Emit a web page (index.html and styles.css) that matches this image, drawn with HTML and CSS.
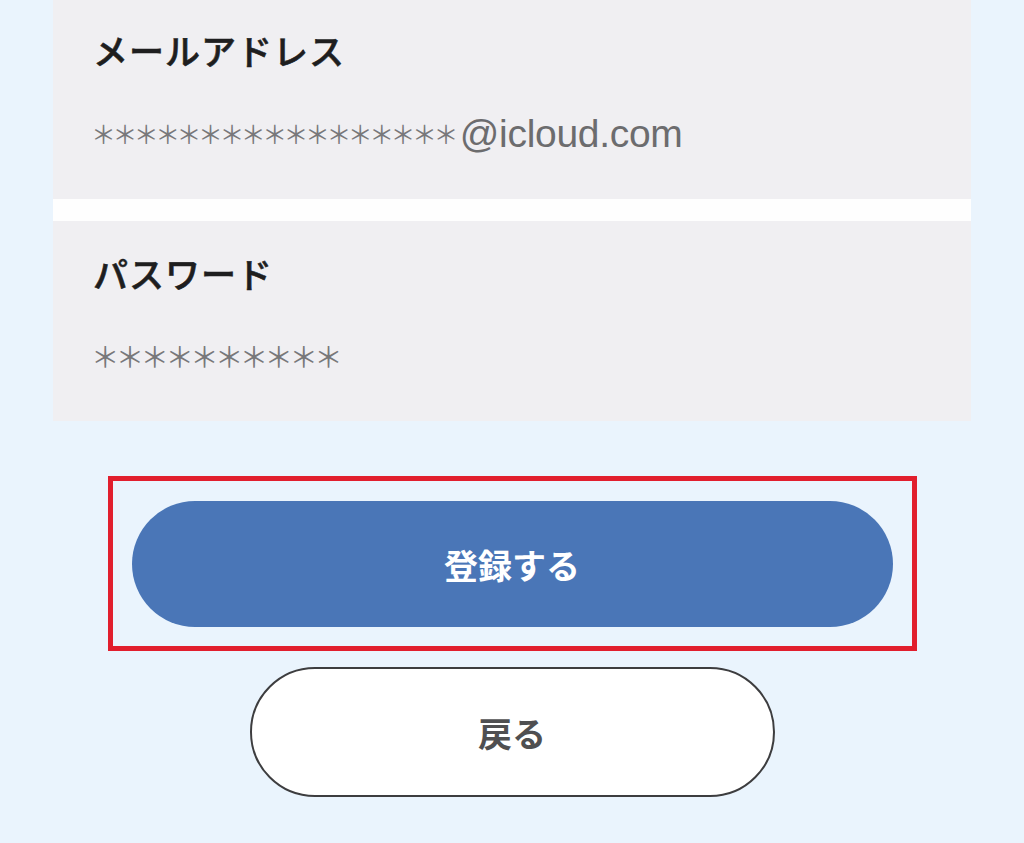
FILE: index.html
```html
<!DOCTYPE html>
<html lang="ja">
<head>
<meta charset="utf-8">
<title>登録確認</title>
<link rel="stylesheet" href="styles.css">
</head>
<body>
<main class="page">
  <section class="fields">
    <div class="field field-email">
      <h2 class="label">メールアドレス</h2>
      <p class="value"><span class="mask">＊＊＊＊＊＊＊＊＊＊＊＊＊＊＊＊＊</span><span class="domain">@icloud.com</span></p>
    </div>
    <div class="field field-password">
      <h2 class="label">パスワード</h2>
      <p class="value"><span class="mask mask-lg">＊＊＊＊＊＊＊＊＊＊</span></p>
    </div>
  </section>
  <div class="highlight">
    <button class="btn btn-primary" type="button">登録する</button>
  </div>
  <button class="btn btn-secondary" type="button">戻る</button>
</main>
</body>
</html>
```
FILE: styles.css
```css
* { box-sizing: border-box; }
html, body {
  margin: 0;
  padding: 0;
  background: #eaf4fd;
  height: 100%;
}
body {
  font-family: "Noto Sans CJK JP", "Noto Sans", sans-serif;
  overflow: hidden;
}
.page {
  display: flex;
  flex-direction: column;
  align-items: center;
}
.fields {
  width: 918px;
  display: flex;
  flex-direction: column;
  gap: 22px;
  background: #fefefe;
}
.field {
  background: #f0eff2;
  padding: 30px 40px 0;
}
.field-email { height: 199px; }
.field-password { height: 200px; padding-top: 32px; }
.label {
  margin: 0;
  font-size: 35px;
  line-height: 40px;
  font-weight: 500;
  letter-spacing: 1px;
  color: #1e1e1f;
  -webkit-text-stroke: 0.6px #1e1e1f;
}
.value {
  margin: 44px 0 0;
  font-family: "Liberation Sans", Arial, sans-serif;
  font-size: 39px;
  line-height: 38px;
  color: #6c6c6e;
  white-space: nowrap;
}
.domain {
  letter-spacing: -0.3px;
}
.mask {
  font-family: "Noto Sans CJK JP", sans-serif;
  font-weight: 400;
  font-size: 25px;
  letter-spacing: -3.6px;
  vertical-align: 3px;
  color: #78787a;
  margin-left: -2px;
  margin-right: 5px;
}
.mask-lg {
  font-size: 28.5px;
  letter-spacing: -3.7px;
  vertical-align: 6px;
}
.highlight {
  margin-top: 55px;
  width: 809px;
  border: 5px solid #e11e2d;
  padding: 20px 19px 19px;
}
.btn {
  display: flex;
  align-items: center;
  justify-content: center;
  font-family: "Noto Sans CJK JP", "Noto Sans", sans-serif;
  font-weight: 700;
  font-size: 34px;
  border-radius: 999px;
  cursor: pointer;
}
.btn-primary {
  width: 100%;
  height: 126px;
  border: none;
  background: #4a76b7;
  color: #ffffff;
}
.btn-secondary {
  margin-top: 16px;
  width: 525px;
  height: 130px;
  border: 2px solid #3d3d3f;
  background: #ffffff;
  color: #4f4f51;
}
```
